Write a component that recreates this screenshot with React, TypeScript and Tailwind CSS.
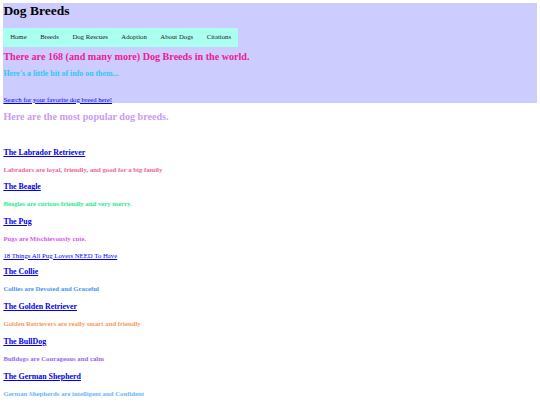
const navItems = ["Home", "Breeds", "Dog Rescues", "Adoption", "About Dogs", "Citations"];

type Breed = {
  name: string;
  blurb: string;
  color: string;
  extra?: string;
};

const breeds: Breed[] = [
  { name: "The Labrador Retriever", blurb: "Labradors are loyal, friendly, and good for a big family", color: "text-[#f2619c]" },
  { name: "The Beagle", blurb: "Beagles are curious friendly and very merry.", color: "text-[#22ee8c]" },
  { name: "The Pug", blurb: "Pugs are Mischievously cute.", color: "text-[#d958ee]", extra: "18 Things All Pug Lovers NEED To Have" },
  { name: "The Collie", blurb: "Collies are Devoted and Graceful", color: "text-[#3d96f5]" },
  { name: "The Golden Retriever", blurb: "Golden Retrievers are really smart and friendly", color: "text-[#f99a5a]" },
  { name: "The BullDog", blurb: "Bulldogs are Courageous and calm", color: "text-[#9866f2]" },
  { name: "The German Shepherd", blurb: "German Shepherds are intelligent and Confident", color: "text-[#6cb4fb]" },
];

function BreedEntry({ breed }: { breed: Breed }) {
  return (
    <>
      <h3 className="my-[7.9px] text-[7.9px] font-bold">
        <a href="#" className="text-[#0000ee] underline">
          {breed.name}
        </a>
      </h3>
      <h4 className={`my-[8.98px] text-[6.75px] font-bold ${breed.color}`}>{breed.blurb}</h4>
      {breed.extra ? (
        <p className="my-[6.75px]">
          <a href="#" className="text-[#0000ee] underline">
            {breed.extra}
          </a>
        </p>
      ) : null}
    </>
  );
}

export default function App() {
  return (
    <div className="min-h-screen bg-white p-[3.375px] font-['Liberation_Serif','Times_New_Roman',serif] text-[6.75px] leading-[1.15] text-black">
      <div className="bg-[#ccccff]">
        <h1 className="mb-[9px] text-[13.5px] font-bold">Dog Breeds</h1>
        <nav className="flex w-fit bg-[#aaffee]">
          {navItems.map((item) => (
            <a key={item} href="#" className="px-[6.75px] pt-[5px] pb-[5.9px] text-[#222]">
              {item}
            </a>
          ))}
        </nav>
        <h2 className="mt-[4.1px] text-[10.125px] font-bold text-[#ec1a96]">
          There are 168 (and many more) Dog Breeds in the world.
        </h2>
        <h3 className="mt-[7.1px] text-[7.9px] font-bold text-[#2cc8fa]">
          Here's a little bit of info on them...
        </h3>
        <p className="mt-[17.2px]">
          <a href="#" className="text-[#0000ee] underline">
            Search for your favorite dog breed here!
          </a>
        </p>
      </div>
      <h2 className="mt-[8.1px] mb-[24.4px] text-[10.125px] font-bold text-[#c99cf5]">
        Here are the most popular dog breeds.
      </h2>
      {breeds.map((breed) => (
        <BreedEntry key={breed.name} breed={breed} />
      ))}
    </div>
  );
}
